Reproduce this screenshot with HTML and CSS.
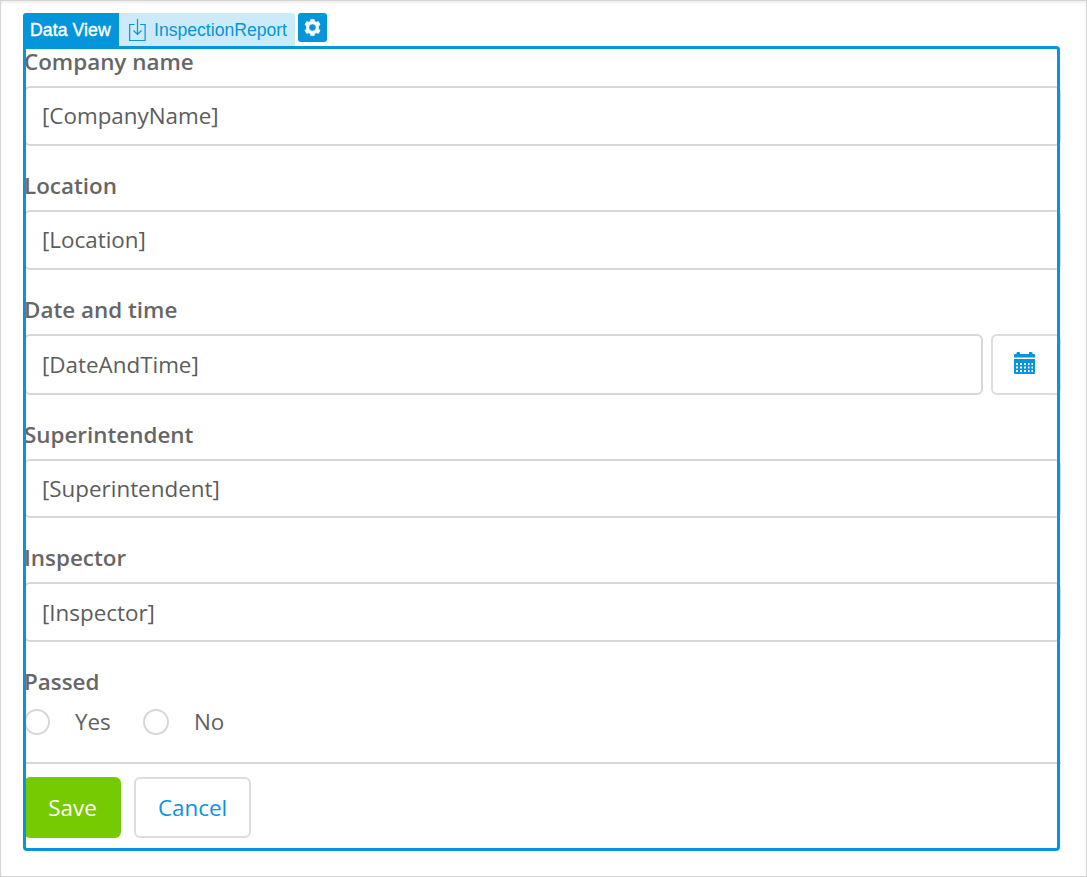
FILE: index.html
```
<!DOCTYPE html>
<html lang="en">
<head>
<meta charset="utf-8">
<title>Data View</title>
<link rel="stylesheet" href="styles.css">
</head>
<body>
<main class="page">
  <header class="tabs">
    <span class="tab tab-active">Data View</span>
    <span class="tab tab-source">
      <svg class="source-icon" width="17" height="23" viewBox="0 0 17 23" fill="none" stroke="currentColor" stroke-width="1.200"><path d="M5.500 5.500H.6v16h15.500v-16h-5M8.500 0v15.500M4.500 11.500l4 4 4-4"/></svg>
      <span class="source-name">InspectionReport</span>
    </span>
    <button class="gear" aria-label="Settings">
      <svg width="17" height="17" viewBox="0 0 17 17"><path fill="#fff" fill-rule="evenodd" stroke="#fff" stroke-width=".6" stroke-linejoin="round" d="M6.700.5h3.600l.5 2 1.300.7 2.200-.7 1.800 3.100-1.600 1.500v2.800l1.600 1.500-1.800 3.100-2.200-.7-1.300.7-.5 2H6.700l-.5-2-1.300-.7-2.200.7L.9 11.400l1.600-1.500V7.100L.9 5.600l1.800-3.100 2.200.7 1.300-.7zM8.500 4.900a3.600 3.600 0 1 0 0 7.200 3.600 3.600 0 0 0 0-7.200z"/></svg>
    </button>
  </header>
  <form class="view">
    <div class="group"><label class="label">Company name</label><div class="input">[CompanyName]</div></div>
    <div class="group"><label class="label">Location</label><div class="input">[Location]</div></div>
    <div class="group"><label class="label">Date and time</label>
      <div class="date-row">
        <div class="input input-date">[DateAndTime]</div>
        <div class="date-button">
          <svg width="21" height="22" viewBox="0 0 21 22"><path fill="#0595db" d="M0 3q0-1 1-1h1.500V1q0-1 1-1h1.500q1 0 1 1v1h9V1q0-1 1-1h1.500q1 0 1 1v1H20q1 0 1 1v2.500H0zM0 7h21v14q0 1-1 1H1q-1 0-1-1z"/><path fill="#fff" d="M2 11h2v2H2zm4 0h2v2H6zm4 0h2v2h-2zm4 0h1.500v2H14zm3.500 0H19v2h-1.500zM2 14.500h2v2H2zm4 0h2v2H6zm4 0h2v2h-2zm4 0h1.500v2H14zm3.500 0H19v2h-1.500zM2 18h2v2H2zm4 0h2v2H6zm4 0h2v2h-2zm4 0h1.500v2H14zm3.500 0H19v2h-1.500z"/></svg>
        </div>
      </div>
    </div>
    <div class="group"><label class="label">Superintendent</label><div class="input input-short">[Superintendent]</div></div>
    <div class="group"><label class="label">Inspector</label><div class="input input-low">[Inspector]</div></div>
    <div class="group-radio"><label class="label">Passed</label>
      <div class="radios">
        <span class="option option-yes"><i class="radio"></i>Yes</span>
        <span class="option"><i class="radio"></i>No</span>
      </div>
    </div>
    <div class="actions">
      <span class="button save">Save</span>
      <span class="button cancel">Cancel</span>
    </div>
    <div class="selection"></div>
  </form>
</main>
</body>
</html>
```
FILE: styles.css
```
* { box-sizing: border-box; }
body { margin: 0; background: #fff; }
.page {
  width: 1087px;
  height: 877px;
  padding: 12px 25px 0 22px;
  border: 1px solid #d4d4d4;
  box-shadow: inset 0 3px 3px -1px #eee;
  overflow: hidden;
}
.tabs { display: flex; align-items: flex-start; height: 33px; }
.tab {
  display: flex;
  align-items: center;
  height: 33px;
  padding-top: 2px;
  font: 17.6px "Liberation Sans", Arial, sans-serif;
  white-space: nowrap;
}
.tab-active {
  width: 96px;
  padding-left: 7px;
  border-radius: 3px 0 0 0;
  background: #0595db;
  color: #fff;
  letter-spacing: 0.1px;
  -webkit-text-stroke: 0.4px #fff;
}
.tab-source {
  width: 176px;
  padding-left: 10px;
  border-radius: 0 3px 0 0;
  background: #cdeaf8;
  color: #0595db;
}
.source-icon { margin-right: 8px; }
.gear {
  display: flex;
  align-items: center;
  justify-content: center;
  width: 29px;
  height: 29px;
  margin-left: 3px;
  padding: 0 1px 0 0;
  border: 0;
  border-radius: 3px;
  background: #0595db;
}
.view {
  position: relative;
  width: 1038px;
  height: 805px;
  padding-left: 1px;
  font: 22.4px/30px "Open Sans", sans-serif;
  color: #606060;
}
.group { margin-bottom: 24px; }
.label { display: block; height: 40px; line-height: 32px; font-weight: 600; color: #666; }
.input {
  display: flex;
  align-items: center;
  height: 60px;
  padding-left: 16px;
  border: 2px solid #d7d7d7;
  border-radius: 6px;
  color: #5c5c5c;
}
.input-short { height: 59px; }
.input-low { padding-top: 2px; }
.date-row { display: flex; gap: 8px; }
.input-date { width: 959px; height: 61px; }
.date-button {
  display: flex;
  flex: 1;
  height: 61px;
  padding: 16px 0 0 21px;
  border: 2px solid #ddd;
  border-radius: 6px;
}
.group-radio { height: 96px; }
.radios { display: flex; height: 32px; align-items: center; }
.option { display: flex; align-items: center; gap: 25px; }
.option-yes { width: 119px; }
.radio { width: 26px; height: 26px; border: 2px solid #d7d7d7; border-radius: 50%; }
.actions { display: flex; gap: 13px; padding-top: 13px; border-top: 2px solid #d7d7d7; }
.button {
  display: flex;
  align-items: center;
  justify-content: center;
  height: 61px;
  border-radius: 6px;
}
.save { width: 97px; background: #76ca02; color: #fff; }
.cancel { width: 117px; border: 2px solid #ddd; color: #0595db; }
.selection {
  position: absolute;
  inset: 0 1px 0 0;
  border: 3px solid #0595db;
  border-radius: 0 4px 4px 4px;
  pointer-events: none;
}
```
